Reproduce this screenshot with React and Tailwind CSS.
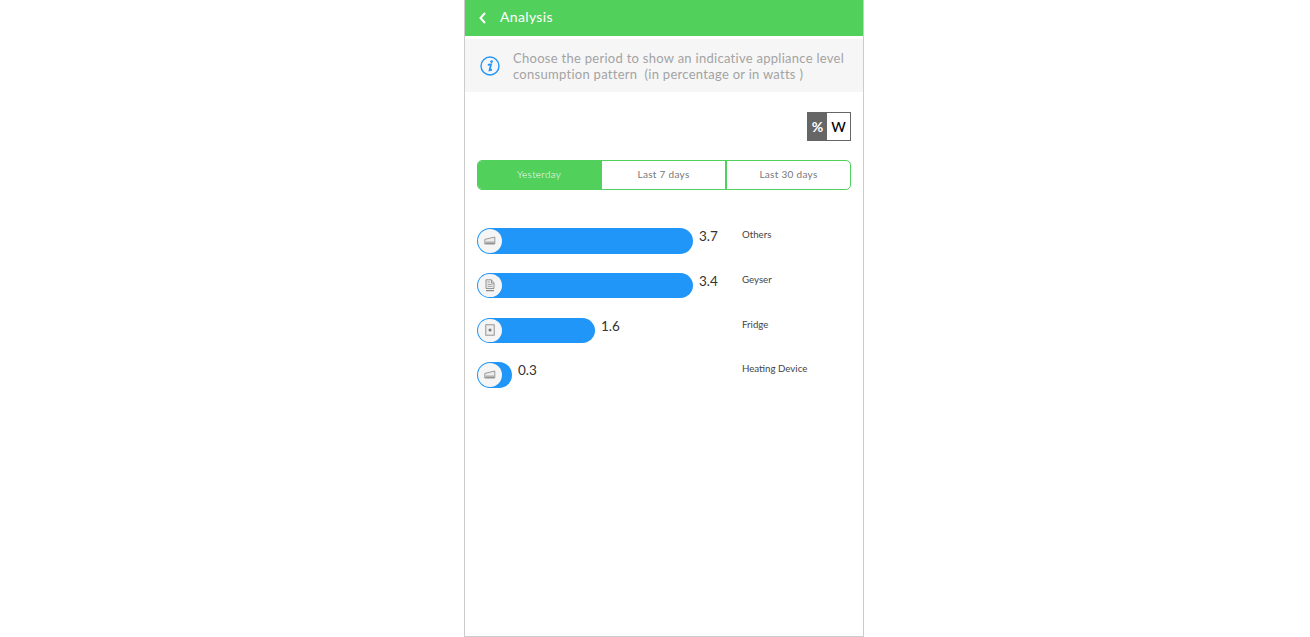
import React from "react";

const font = { fontFamily: '"Lato", "Open Sans", sans-serif' };

function HeaterIcon() {
  return (
    <svg width="12" height="10" viewBox="0 0 12 10" fill="none" stroke="#8f8f8f" strokeWidth="0.9">
      <path d="M0.8 3.4 L10.8 1 V8 H0.8 Z" fill="#ededed" />
      <path d="M1.5 6 H10.2" strokeWidth="0.7" />
      <path d="M1.5 7.2 H10.2" strokeWidth="0.9" stroke="#777" />
    </svg>
  );
}
function GeyserIcon() {
  return (
    <svg width="10" height="13" viewBox="0 0 10 13" fill="none" stroke="#8a8a8a" strokeWidth="0.9">
      <path d="M1 0.8 H6.5 V4 H9 V9.5 H1 Z" fill="#ececec" />
      <path d="M6.5 0.8 L9 4 M2.5 3 H5 M2.5 5.4 H7.5 M2.5 7.4 H7.5" strokeWidth="0.7" />
      <path d="M1 11.6 H9" strokeWidth="1.3" />
    </svg>
  );
}
function FridgeIcon() {
  return (
    <svg width="10" height="12" viewBox="0 0 10 12" fill="none" stroke="#8a8a8a" strokeWidth="0.9">
      <rect x="0.8" y="0.8" width="8.4" height="10.4" fill="#efefef" />
      <circle cx="5" cy="6" r="1.5" fill="#777" stroke="none" />
    </svg>
  );
}

function Row({ width, value, label, icon, mb }) {
  return (
    <div className={`flex items-start ${mb}`}>
      <div className="w-[265px] flex items-start shrink-0">
        <div className="h-[25.5px] rounded-full bg-[#2196f9] relative shrink-0 flex items-center" style={{ width }}>
          <div className="absolute left-[1px] w-[23.5px] h-[23.5px] rounded-full bg-[#f5f5f5] flex items-center justify-center">
            {icon}
          </div>
        </div>
        <span className="ml-[6px] text-[13.5px] leading-[17px] text-[#333]">{value}</span>
      </div>
      <span className="text-[9.7px] leading-[13px] text-[#444]">{label}</span>
    </div>
  );
}

export default function App() {
  return (
    <div className="w-[1310px] h-[637px] bg-white flex justify-center" style={font}>
      <div className="w-[400px] h-[637px] ml-[18px] border-x border-b border-[#cccccc] bg-white flex flex-col">
        <div className="h-[36px] bg-[#51d05c] flex items-start pl-[13px] text-white">
          <svg width="10" height="12" viewBox="0 0 10 12" fill="none" stroke="white" strokeWidth="2" className="mt-[12px]">
            <path d="M7 1 L2.5 6 L7 11" />
          </svg>
          <span className="ml-[12px] mt-[8px] text-[14px] leading-[18px] tracking-[0.35px]">Analysis</span>
        </div>
        <div className="h-[53px] mt-[3px] bg-[#f6f6f6] flex items-center pl-[15px]">
          <svg width="20" height="20" viewBox="0 0 20 20" fill="none" className="shrink-0">
            <circle cx="10" cy="10" r="9" stroke="#2196f9" strokeWidth="1.4" />
            <circle cx="11.6" cy="5.6" r="1.3" fill="#2196f9" />
            <path d="M7.8 8.8 L11 8.4 L9.6 14.2 L12 13.6" stroke="#2196f9" strokeWidth="1.8" />
          </svg>
          <p className="ml-[13px] text-[13px] leading-[16px] text-[#a3a3a3] tracking-[0.28px] whitespace-pre">
            {"Choose the period to show an indicative appliance level\nconsumption pattern  (in percentage or in watts )"}
          </p>
        </div>
        <div className="flex justify-end pr-[12px] mt-[20px]">
          <div className="flex h-[29px] w-[44px] border border-[#666] text-[14px]">
            <div className="w-[19px] bg-[#666] text-white flex items-center justify-center text-[14px] font-bold">%</div>
            <div className="flex-1 bg-white text-black flex items-center justify-center font-medium">W</div>
          </div>
        </div>
        <div className="mx-[12px] mt-[19px] h-[30px] flex border border-[#51d05c] rounded-[5px] overflow-hidden text-[10px] leading-[14px] text-[#777] tracking-[0.3px]">
          <div className="w-[124px] bg-[#51d05c] text-white flex items-start justify-center pt-[6px] pr-[2px] font-light">Yesterday</div>
          <div className="w-[125px] border-r-2 border-[#51d05c] flex items-start justify-center pt-[6px]">Last 7 days</div>
          <div className="flex-1 flex items-start justify-center pt-[6px]">Last 30 days</div>
        </div>
        <div className="mt-[38.2px] px-[12px]">
          <Row width={216} value="3.7" label="Others" icon={<HeaterIcon />} mb="mb-[19.17px]" />
          <Row width={216} value="3.4" label="Geyser" icon={<GeyserIcon />} mb="mb-[19.17px]" />
          <Row width={118} value="1.6" label="Fridge" icon={<FridgeIcon />} mb="mb-[19.17px]" />
          <Row width={35} value="0.3" label="Heating Device" icon={<HeaterIcon />} mb="" />
        </div>
      </div>
    </div>
  );
}
